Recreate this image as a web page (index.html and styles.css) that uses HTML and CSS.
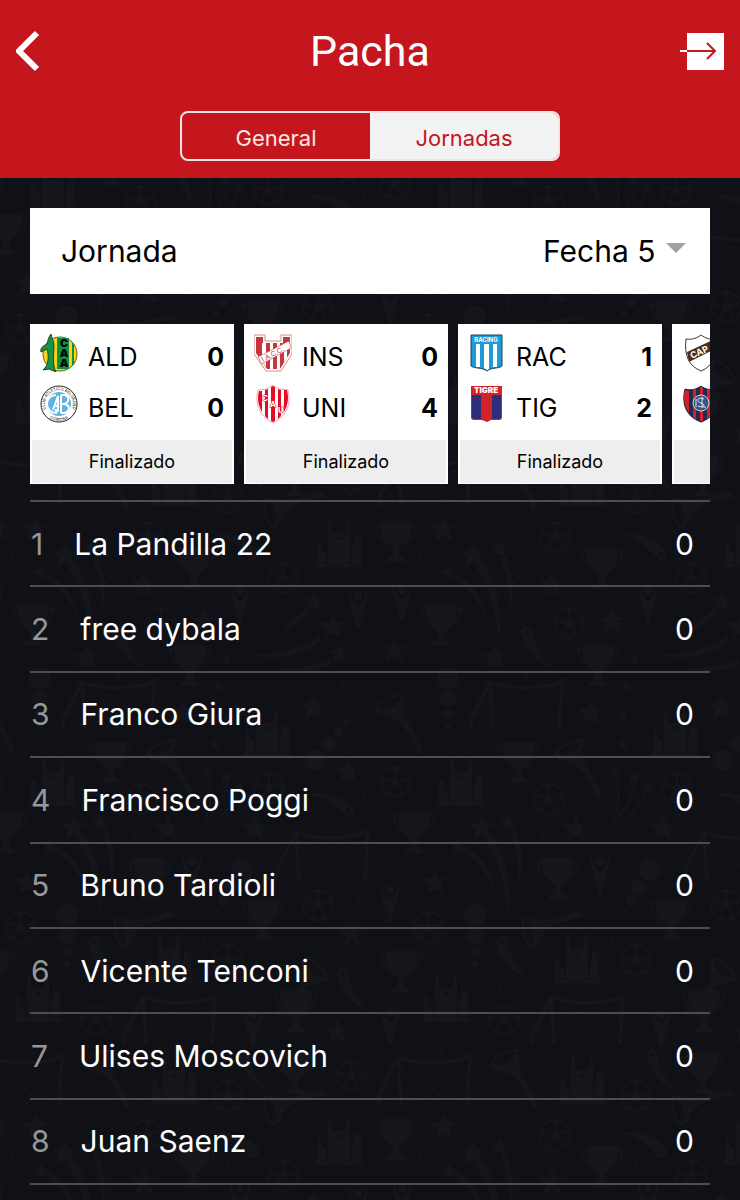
FILE: index.html
```html
<!DOCTYPE html>
<html lang="es">
<head>
    <meta charset="UTF-8">
    <meta name="viewport" content="width=device-width, initial-scale=1.0">
    <title>Pacha</title>
    <link rel="stylesheet" href="styles.css">
</head>
<body>
    <!-- Football pattern behind the page -->
    <svg class="backdrop" aria-hidden="true">
        <defs>
            <path id="star" d="M0-14L3.8-5L14-4.6L6-1.6L6 0L8.6 11L0 6L-8.6 11L-6 1.4L-14-4.6L-3.8-5Z"/>
            <g id="cup">
                <path d="M-16 0H16C17 15 10 24 3 27V34L9 38V41H-9V38L-3 34V27C-10 24-17 15-16 0Z"/>
                <path d="M-16 4H-20C-20 12-17 16-12 18M16 4H20C20 12 17 16 12 18" class="line"/>
            </g>
            <g id="ball">
                <circle r="15" class="line"/>
                <path d="M0-5L5-1.500L3 4H-3L-5-1.500ZM-4-14L0-10L4-14ZM13-6L9-3L12 2ZM-13-6L-9-3L-12 2ZM9 12L6 8L3 13ZM-9 12L-6 8L-3 13Z"/>
                <path d="M0-5V-10M5-1L9-3M3 4L6 8M-3 4L-6 8M-5-1L-9-3" class="line"/>
            </g>
            <path id="castle" d="M-24 0V-3H-22V-22L-20-28L-17-22V-16H-13V-3H-11V-42L-9-50L-7-42V-34H7V-42L9-50L11-42V-3H13V-22H15V-36L17-30H20L22-36V-3H24V0ZM-3-30A3 3 0 0 0 3-30Z"/>
            <g id="figure">
                <path d="M-9 2C-11 20-5 28-1 45H1C5 28 11 20 9 2C8 14 5 20 0 22C-5 20-8 14-9 2Z"/>
                <circle cy="13" r="4"/>
            </g>
            <g id="goal">
                <path d="M21 2C40 10 74 10 93 1L90 49M21 2L24 49M21 2L3 38L1 50" class="line thick"/>
                <path d="M14 20L40 48M22 14L55 48M34 12L70 48M48 12L84 48M62 12L90 40M76 12L90 26M90 14L58 48M80 12L44 48M66 12L30 48M52 12L20 46M38 12L8 44M26 12L6 36M8 32L20 46" class="line thin"/>
            </g>
            <g id="horn">
                <path d="M2 16C5 8 18 1 31 1C32 9 29 18 33 25L50 56L45 62C38 44 31 32 22 26C14 22 4 24 2 16ZM6 15C9 21 25 14 28 4C20 4 8 9 6 15Z" fill-rule="evenodd"/>
            </g>
            <path id="comet" d="M-6 0A6 6 0 1 1 6 0C7 13 14 25 24 36C9 30-4 15-6 0ZM-2 0A2 2 0 1 0 2 0A2 2 0 1 0-2 0Z" fill-rule="evenodd"/>
            <g id="bubbles">
                <circle r="11"/><circle cy="21" r="8"/><circle cy="36" r="5"/><circle cy="49" r="3"/><circle cy="57" r="1"/>
            </g>
            <g id="burst">
                <use href="#star" x="473" y="556"/>
                <use href="#star" transform="translate(499 549) scale(.7)"/>
                <use href="#star" transform="translate(449 573) scale(.65)"/>
                <path d="M475 566C488 585 496 610 499 640C504 612 496 582 482 562ZM500 558C508 576 511 596 509 616C515 596 514 575 506 556ZM453 577C468 588 480 603 488 622C484 600 472 582 456 573Z"/>
            </g>
            <g id="tile">
                <use href="#castle" x="339" y="567"/><use href="#castle" x="461" y="806"/>
                <use href="#castle" x="675" y="757"/><use href="#castle" x="577" y="983"/>
                <use href="#castle" x="446" y="1022"/><use href="#castle" x="582" y="1104"/>

                <use href="#cup" x="396" y="521"/><use href="#cup" x="602" y="548"/>
                <use href="#cup" x="441" y="605"/><use href="#cup" x="598" y="645"/>
                <use href="#cup" x="519" y="742"/><use href="#cup" x="414" y="812"/>
                <use href="#cup" x="558" y="858"/><use href="#cup" x="671" y="899"/>
                <use href="#cup" x="401" y="951"/><use href="#cup" x="704" y="991"/>
                <use href="#cup" x="703" y="1053"/>

                <use href="#burst"/><use href="#burst" x="9" y="273"/>
                <use href="#star" x="444" y="530"/><use href="#star" x="552" y="585"/>
                <use href="#star" x="333" y="627"/><use href="#star" x="394" y="651"/>
                <use href="#star" x="612" y="622"/><use href="#star" x="495" y="658"/>
                <use href="#star" x="313" y="708"/><use href="#star" x="591" y="713"/>
                <use href="#star" x="348" y="772"/><use href="#star" x="576" y="829"/>
                <use href="#star" x="663" y="829"/><use href="#star" x="435" y="883"/>
                <use href="#star" x="352" y="935"/><use href="#star" x="337" y="1032"/>
                <use href="#star" transform="translate(314 602) scale(.7)"/>
                <use href="#star" transform="translate(339 654) scale(.7)"/>
                <use href="#star" transform="translate(635 659) scale(.5)"/>
                <use href="#star" transform="translate(626 687) scale(.5)"/>
                <use href="#star" transform="translate(623 716) scale(.5)"/>
                <use href="#star" transform="translate(623 744) scale(.5)"/>
                <use href="#star" transform="translate(616 774) scale(.5)"/>
                <use href="#star" transform="translate(634 778) scale(.5)"/>
                <use href="#star" transform="translate(648 788) scale(.5)"/>
                <path d="M617 780C620 795 619 805 614 818M635 784C632 800 624 812 611 822M646 793C640 806 632 814 622 822" class="line"/>
                <path d="M728 636C705 650 680 655 654 655C680 660 708 658 728 642ZM738 659C718 668 700 669 680 667C702 673 722 673 740 664ZM716 609C706 614 698 622 690 632C704 626 712 618 718 612Z"/>

                <use href="#ball" x="555" y="537"/><use href="#ball" x="569" y="623"/>
                <use href="#ball" x="691" y="578"/><use href="#ball" x="395" y="782"/>
                <use href="#ball" x="549" y="799"/><use href="#ball" x="677" y="788"/>
                <use href="#ball" x="318" y="905"/><use href="#ball" x="429" y="927"/>
                <use href="#ball" x="636" y="960"/><use href="#ball" x="504" y="1020"/>
                <use href="#ball" x="351" y="1076"/><use href="#ball" x="636" y="1096"/>

                <use href="#figure" x="358" y="583"/><use href="#figure" x="402" y="577"/>
                <use href="#figure" x="648" y="578"/><use href="#figure" x="390" y="877"/>
                <use href="#figure" x="600" y="849"/><use href="#figure" x="390" y="1000"/>
                <use href="#figure" x="661" y="1002"/>

                <use href="#goal" x="469" y="680"/><use href="#goal" x="530" y="995"/>
                <use href="#goal" x="377" y="1055"/><use href="#goal" x="683" y="830"/>

                <use href="#horn" x="373" y="693"/><use href="#horn" x="552" y="738"/>
                <use href="#horn" x="488" y="1048"/>
                <use href="#horn" transform="translate(664 526) rotate(-76)"/>
                <use href="#horn" transform="translate(514 946) rotate(-76)"/>
                <use href="#horn" transform="translate(728 950) rotate(72)"/>

                <use href="#comet" x="527" y="632"/><use href="#comet" x="502" y="942"/>
                <use href="#comet" x="343" y="974"/><use href="#comet" x="652" y="1055"/>
                <use href="#comet" transform="translate(661 554) rotate(150)"/>
                <use href="#comet" transform="translate(348 810) rotate(145)"/>

                <use href="#bubbles" x="448" y="678"/><use href="#bubbles" x="475" y="915"/>
                <use href="#bubbles" transform="translate(315 760) rotate(-140)"/>
                <use href="#bubbles" transform="translate(650 870) rotate(32)"/>

                <path d="M418 555h3v3h-3zM517 576h3v3h-3zM596 529h3v3h-3zM634 567h3v3h-3zM382 619h3v3h-3zM470 686h3v3h-3zM341 683h3v3h-3zM525 674h3v3h-3zM502 798h3v3h-3zM362 794h3v3h-3zM541 834h3v3h-3zM357 900h3v3h-3zM447 954h3v3h-3zM498 986h3v3h-3zM610 940h3v3h-3zM379 1054h3v3h-3zM440 1052h3v3h-3zM540 1065h3v3h-3z"/>
            </g>
            <g id="strip">
                <use href="#tile" x="-408"/><use href="#tile"/><use href="#tile" x="408"/>
            </g>
        </defs>
        <use href="#strip" y="-598"/>
        <use href="#strip"/>
        <use href="#strip" y="598"/>
    </svg>

    <header class="header">
        <div class="title-bar">
            <button type="button" class="icon-btn" aria-label="Volver">
                <svg width="26" height="42" viewBox="0 0 26 42"><path d="M21 3L3 21L21 39" fill="none" stroke="#fff" stroke-width="6"/></svg>
            </button>
            <h1>Pacha</h1>
            <button type="button" class="icon-btn" aria-label="Salir">
                <svg width="44" height="38" viewBox="0 0 44 38">
                    <path d="M7 1H44V38H7Z" fill="#fff"/>
                    <path d="M0 19H7" stroke="#fff" stroke-width="2"/>
                    <path d="M7 19H35M27 11L35 19L27 27" fill="none" stroke="#c4161c" stroke-width="2"/>
                </svg>
            </button>
        </div>
        <div class="tabs">
            <button type="button" class="tab">General</button>
            <button type="button" class="tab active">Jornadas</button>
        </div>
    </header>

    <main class="content">
        <div class="round-picker">
            <label for="round">Jornada</label>
            <select id="round" name="round">
                <option>Fecha 5</option>
            </select>
            <svg class="caret" width="20" height="10" viewBox="0 0 20 10"><path d="M0 0H20L10 10Z" fill="#a0a0a0"/></svg>
        </div>

        <section class="matches">
            <article class="match">
                <div class="team">
                    <!-- Aldosivi -->
                    <svg class="crest" viewBox="0 0 38 38">
                        <circle cx="20" cy="20" r="17" fill="#f7d417" stroke="#6b5a1c"/>
                        <path d="M17 4H29V35H17Z" fill="#0c9045"/>
                        <path d="M32 8L34 11V30L32 32Z" fill="#0c9045"/>
                        <path d="M11 0C8 4 8 7 7 10C3 12 0 14 1 18L7 15C9 22 9 31 3 36L9 35L16 38C12 31 14 20 14 12C14 7 12 5 11 0Z" fill="#159447" stroke="#22441f"/>
                        <text x="24" y="13" font-size="11" class="crest-text">C</text>
                        <text x="24" y="23" font-size="11" class="crest-text">A</text>
                        <text x="24" y="33" font-size="11" class="crest-text">A</text>
                    </svg>
                    <span class="code">ALD</span>
                    <span class="goals">0</span>
                </div>
                <div class="team">
                    <!-- Belgrano -->
                    <svg class="crest" viewBox="0 0 38 38">
                        <circle cx="19" cy="19" r="18" fill="#fff" stroke="#222"/>
                        <defs>
                            <path id="ring-top" d="M9 29A14 14 0 1 1 29 29"/>
                            <path id="ring-bottom" d="M2 19A17 17 0 0 0 36 19"/>
                        </defs>
                        <text font-size="4" fill="#222"><textPath href="#ring-top" startOffset="50%" text-anchor="middle">CLUB ATLÉTICO BELGRANO</textPath></text>
                        <text font-size="4" fill="#222"><textPath href="#ring-bottom" startOffset="50%" text-anchor="middle">CÓRDOBA</textPath></text>
                        <circle cx="19" cy="19" r="12" fill="#5db4e4"/>
                        <path d="M16 10A9 9 0 0 0 16 28V24M13 25L18 11V27M14 21H18M21 10V28M21 10H25C30 12 29 18 24 19H21M24 19C31 20 30 27 24 28H21" fill="none" stroke="#fff" stroke-width="2"/>
                    </svg>
                    <span class="code">BEL</span>
                    <span class="goals">0</span>
                </div>
                <div class="status">Finalizado</div>
            </article>

            <article class="match">
                <div class="team">
                    <!-- Instituto -->
                    <svg class="crest" viewBox="0 0 38 38">
                        <path d="M0 1H11V7H27V1H38V20L27 37H12L0 20Z" fill="#fff" stroke="#d88"/>
                        <path d="M2 3H9V9H29V3H36V19L26 35H13L2 19Z" fill="#c8353d"/>
                        <path d="M8 9H12V33L8 27ZM16 9H19V35H16ZM23 9H26V35H23ZM30 9H33V24L30 28Z" fill="#fff"/>
                        <path d="M4 23L35 7L37 14L8 30Z" fill="#fff" stroke="#c8353d" stroke-width=".5"/>
                        <text x="9" y="28" font-size="7" fill="#c8353d" transform="rotate(-28 9 28)">I.A.C.C.</text>
                    </svg>
                    <span class="code">INS</span>
                    <span class="goals">0</span>
                </div>
                <div class="team">
                    <!-- Unión -->
                    <svg class="crest" viewBox="0 0 38 38">
                        <path d="M19 0L25 4L34 5C37 18 34 30 19 38C4 30 1 18 4 5L13 4Z" fill="#fff" stroke="#f3a5ae"/>
                        <path d="M5 6H8V27C4 20 3 13 5 6ZM11 5L14 4V34L11 31ZM17 2L19 1L21 2V36L19 37L17 36ZM24 4L27 5V31L24 34ZM30 5H33C35 13 34 20 30 27Z" fill="#e30d25"/>
                        <g fill="#fff" stroke="#e30d25" stroke-width="1" paint-order="stroke" font-size="8" font-weight="bold">
                            <text x="8" y="16">C</text><text x="16" y="22">A</text><text x="24" y="28">U</text>
                        </g>
                    </svg>
                    <span class="code">UNI</span>
                    <span class="goals">4</span>
                </div>
                <div class="status">Finalizado</div>
            </article>

            <article class="match">
                <div class="team">
                    <!-- Racing -->
                    <svg class="crest" viewBox="0 0 38 38">
                        <path d="M3 1H34V32C30 35 24 33 19 37C14 33 7 35 3 32Z" fill="#1e9bd7" stroke="#23405c"/>
                        <path d="M8 10H12V33L8 33ZM16 10H21V35L19 36L16 34ZM25 10H29V33L25 33Z" fill="#fff"/>
                        <text x="18" y="8" font-size="6" fill="#fff" font-weight="bold" text-anchor="middle">RACING</text>
                    </svg>
                    <span class="code">RAC</span>
                    <span class="goals">1</span>
                </div>
                <div class="team">
                    <!-- Tigre -->
                    <svg class="crest" viewBox="0 0 38 38">
                        <path d="M3 1H34V32Q34 35 31 35H23L19 37L14 35H6Q3 35 3 32Z" fill="#d2232a"/>
                        <path d="M4 10H13V34H6Q4 34 4 32ZM24 10H33V32Q33 34 31 34H24Z" fill="#2c2e7b"/>
                        <text x="18" y="8" font-size="8" fill="#fff" font-weight="900" text-anchor="middle">TIGRE</text>
                    </svg>
                    <span class="code">TIG</span>
                    <span class="goals">2</span>
                </div>
                <div class="status">Finalizado</div>
            </article>

            <article class="match">
                <div class="team">
                    <!-- Platense -->
                    <svg class="crest" viewBox="0 0 38 38">
                        <path d="M4 5C10 6 15 4 19 1C23 4 28 6 34 5C36 22 31 32 19 37C7 32 2 22 4 5Z" fill="#fff" stroke="#4a3222"/>
                        <path d="M5 18L33 5L35 14L7 28Z" fill="#4a2f1d"/>
                        <text x="10" y="25" font-size="9" fill="#fff" font-weight="bold" transform="rotate(-25 10 25)">CAP</text>
                    </svg>
                </div>
                <div class="team">
                    <!-- San Lorenzo -->
                    <svg class="crest" viewBox="0 0 38 38">
                        <path d="M3 4C9 6 15 4 19 1C23 4 29 6 35 4C39 20 33 32 19 37C5 32-1 20 3 4Z" fill="#1f2c50" stroke="#2a2430"/>
                        <path d="M3 5L7 6V28C2 21 1 12 3 5ZM11 5L14 4V35L11 32ZM18 2H21V36H18ZM25 4L28 5V32L25 34ZM32 5H34C36 14 34 24 32 27Z" fill="#d3202f"/>
                        <circle cx="19" cy="18" r="8" fill="#3b5583" stroke="#cfd5df"/>
                        <path d="M22 14C15 11 14 17 19 18C24 19 22 24 16 21M14 14V22M20 12V22H24" fill="none" stroke="#e2e6ec" stroke-width="1"/>
                    </svg>
                </div>
                <div class="status"></div>
            </article>
        </section>

        <ol class="ranking">
            <li><span class="pos">1</span><span class="name">La Pandilla 22</span><span class="points">0</span></li>
            <li><span class="pos">2</span><span class="name">free dybala</span><span class="points">0</span></li>
            <li><span class="pos">3</span><span class="name">Franco Giura</span><span class="points">0</span></li>
            <li><span class="pos">4</span><span class="name">Francisco Poggi</span><span class="points">0</span></li>
            <li><span class="pos">5</span><span class="name">Bruno Tardioli</span><span class="points">0</span></li>
            <li><span class="pos">6</span><span class="name">Vicente Tenconi</span><span class="points">0</span></li>
            <li><span class="pos">7</span><span class="name">Ulises Moscovich</span><span class="points">0</span></li>
            <li><span class="pos">8</span><span class="name">Juan Saenz</span><span class="points">0</span></li>
        </ol>
    </main>
</body>
</html>
```
FILE: styles.css
```css
* {
    box-sizing: border-box;
}

body {
    position: relative;
    display: flex;
    flex-direction: column;
    min-height: 100vh;
    margin: 0;
    background-color: #101116;
    font-family: Inter, "Liberation Sans", sans-serif;
    font-size: 30px;
}

button, select {
    font-family: inherit;
}

/* Background pattern */
.backdrop {
    position: absolute;
    top: 0;
    left: 0;
    width: 100%;
    height: 100%;
    z-index: -1;
    fill: #15161b;
}

.backdrop .line {
    fill: none;
    stroke: #15161b;
    stroke-width: 2;
}

.backdrop .thick {
    stroke-width: 4;
}

.backdrop .thin {
    stroke-width: 1;
}

/* Header */
.header {
    padding: 20px 16px 17px;
    background-color: #c4161c;
}

.title-bar {
    display: flex;
    align-items: center;
    justify-content: space-between;
    height: 62px;
}

h1 {
    flex: 1;
    margin: 0;
    color: #fff;
    font-family: Roboto, sans-serif;
    font-size: 43px;
    font-weight: normal;
    text-align: center;
}

.icon-btn {
    display: flex;
    width: 44px;
    padding: 0;
    border: none;
    background: none;
    cursor: pointer;
}

.tabs {
    display: flex;
    width: 380px;
    max-width: 100%;
    height: 50px;
    margin: 29px auto 0;
    border: 2px solid #f3e4e4;
    border-radius: 8px;
    overflow: hidden;
}

.tab {
    flex: 1;
    padding: 3px 0 0;
    border: none;
    background: none;
    color: #f9e6e4;
    font-size: 22px;
    cursor: pointer;
}

.tab.active {
    background-color: #f3f3f3;
    color: #c4161c;
}

/* Content */
.content {
    flex: 1;
    display: flex;
    flex-direction: column;
    padding: 30px 30px 15px;
}

.round-picker {
    display: flex;
    align-items: center;
    gap: 10px;
    height: 86px;
    padding: 0 24px 0 31px;
    background-color: #fff;
    color: #000;
}

.round-picker label {
    margin-right: auto;
}

.round-picker select {
    appearance: none;
    padding: 0;
    border: none;
    background: none;
    color: #000;
    font-size: 30px;
}

.caret {
    margin-bottom: 6px;
}

.matches {
    display: flex;
    gap: 10px;
    margin: 30px 0 16px;
    overflow: hidden;
}

.match {
    flex: 0 0 30%;
    display: flex;
    flex-direction: column;
    gap: 13px;
    padding-top: 10px;
    background-color: #fff;
    border-bottom: 1px solid #fff;
    color: #000;
}

.team {
    display: flex;
    align-items: flex-end;
    gap: 10px;
    height: 38px;
    padding: 0 10px;
    font-size: 25px;
    line-height: 30px;
}

.crest {
    width: 38px;
    height: 38px;
}

.crest-text {
    font-weight: 900;
    text-anchor: middle;
}

.goals {
    margin-left: auto;
    font-weight: bold;
}

.status {
    height: 43px;
    margin: 4px 2px 0;
    background-color: #eee;
    font-size: 18px;
    line-height: 44px;
    text-align: center;
}

/* Ranking */
.ranking {
    flex: 1;
    display: grid;
    grid-auto-rows: 1fr;
    margin: 0;
    padding: 0;
    border-top: 2px solid #4d4e52;
    color: #fff;
    list-style: none;
}

.ranking li {
    display: flex;
    align-items: center;
    padding: 0 16px 0 1px;
    border-bottom: 2px solid #4d4e52;
}

.pos {
    margin-right: 31px;
    color: #97989b;
}

.points {
    margin-left: auto;
}
```
